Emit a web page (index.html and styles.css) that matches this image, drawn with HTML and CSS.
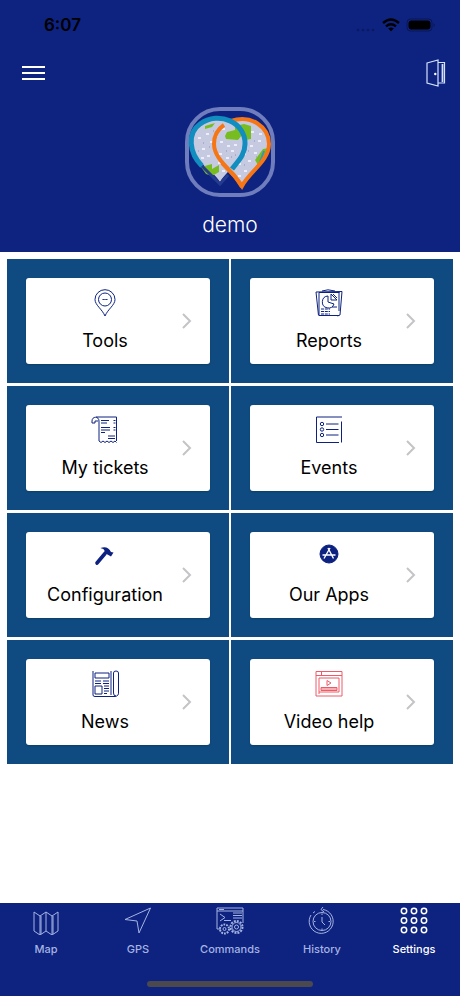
FILE: index.html
```html
<!DOCTYPE html>
<html lang="en">
<head>
  <meta charset="UTF-8" />
  <meta name="viewport" content="width=device-width, initial-scale=1.0"/>
  <title>Settings</title>
  <link rel="stylesheet" href="styles.css">
</head>
<body>

  <header>
    <!-- Phone status bar -->
    <div class="status-bar">
      <span class="time">6:07</span>
      <div class="status-icons">
        <svg width="20" height="14" viewBox="0 0 20 14" fill="#0b1a60"><circle cx="2" cy="12" r="1.3"/><circle cx="7" cy="12" r="1.3"/><circle cx="12" cy="12" r="1.3"/><circle cx="17" cy="12" r="1.3"/></svg>
        <svg width="18" height="14" viewBox="0 0 18 14" fill="none" stroke="#000" stroke-width="2.4"><path d="M1 5 Q9 -2 17 5"/><path d="M4 8.3 Q9 4 14 8.3"/><path d="M9 13.2 L6.2 10.6 Q9 8.6 11.8 10.6 Z" fill="#000" stroke="none"/></svg>
        <svg width="30" height="14" viewBox="0 0 30 14"><rect x="1" y="1" width="25" height="12" rx="3.5" fill="none" stroke="#0a1650"/><rect x="3" y="3" width="21" height="8" rx="2" fill="#000" stroke="#000"/><path d="M27.5 5 Q30 7 27.5 9 Z" fill="#0a1650"/></svg>
      </div>
    </div>

    <div class="toolbar">
      <button class="icon-btn" aria-label="Menu">
        <svg width="24" height="16" viewBox="0 0 24 16" stroke="#fff" stroke-width="2"><path d="M0 2h23M0 8h23M0 14h23"/></svg>
      </button>
      <button class="icon-btn" aria-label="Log out">
        <svg width="20" height="28" viewBox="0 0 20 28" fill="none" stroke="#d5e2ff" stroke-width="1.2"><path d="M1 4 L12 1 V27 L1 24 Z"/><path d="M12 3.5 H18.5 V24 H12"/><path d="M16.500 5 V23" stroke-width="1.8"/><circle cx="9.3" cy="15" r="1.2" fill="#fff" stroke="none"/></svg>
      </button>
    </div>

    <div class="profile">
      <svg class="avatar" width="90" height="90" viewBox="0 0 90 90">
        <rect x="2" y="2" width="86" height="86" rx="33" fill="#0e2280" stroke="#6f7dbc" stroke-width="4"/>
        <path d="M57 79 C48 64 30 53 30 37 C30 21 42 12 56 12 C71 12 83 22 83 37 C83 54 65 64 57 79 Z" fill="#c6cae0"/>
        <path d="M35 75 C27 62 7 54 7 37 C7 22 19 12 34 12 C49 12 60 22 60 37 C60 52 43 62 35 75 Z" fill="#c6cae0"/>
        <path d="M40 29 L42 25 L50 23 L50 19 L59 17 L66 19 L66 32 L60 33 L57 28 L53 33 L41 32 Z M16 60 L27 57 L27 62 L34 58 L34 65 L27 69 L21 67 Z M20 19 L30 16 L27 20 L20 22 Z M78 42 L84 41 L80 52 L73 58 L70 53 Z" fill="#78bd20"/>
        <path d="M79 44 L75 55" stroke="#3d91b7" stroke-width="2"/>
        <!-- light map speckle -->
        <path d="M14 31h1M22 27h1M26 35h1M18 42h1M31 29h1M38 22h1M23 49h1M35 47h1M43 39h1M50 38h1M42 51h1M29 43h1M17 51h1M36 35h1M66 39h1M74 34h1M70 46h1M64 54h1M60 64h1M54 57h1M67 25h1M75 27h1M34 56h1M47 44h1M59 47h1M54 69h1M38 64h1" stroke="#ecedf8" stroke-width="2" stroke-linecap="square"/>
        <path d="M18 36h1M28 24h1M24 40h1M32 51h1M41 44h1M46 50h1M63 44h1M69 34h1M59 58h1M71 50h1M13 44h1M50 48h1" stroke="#a9aecd" stroke-width="2"/>
        <path d="M46 14 C66 7 84 20 84 37 C84 54 65 64 57 79 C48 64 29 53 29 37 C29 28 33 22 39 18" fill="none" stroke="#f67616" stroke-width="4"/>
        <path d="M14 56 L35 77 L43 68" fill="none" stroke="#253b8f" stroke-width="3"/>
        <path d="M17 59 C4 46 2 26 15 17 C34 3 61 16 60 37 C60 48 53 54 47 62" fill="none" stroke="#128dc0" stroke-width="5"/>
        <path d="M37 56 L49 68 L57 80" fill="none" stroke="#f67616" stroke-width="4"/>
      </svg>
      <div class="username">demo</div>
    </div>
  </header>

  <!-- Settings tiles -->
  <main class="tiles">
    <a class="tile" href="#">
      <div class="card">
        <div class="card-body">
          <svg class="icon" viewBox="0 0 28 28"><path d="M14 27 C11 20 4 16 4 10.5 A10 9.8 0 0 1 24 10.5 C24 16 17 20 14 27 Z"/><circle cx="14" cy="10.5" r="6.5"/><path d="M11.5 10.5h5" stroke-dasharray="1.4 .4"/></svg>
          <span class="label">Tools</span>
        </div>
        <svg class="chevron" viewBox="0 0 10 16"><path d="M1 1 L8 8 L1 15"/></svg>
      </div>
    </a>
    <a class="tile" href="#">
      <div class="card">
        <div class="card-body">
          <svg class="icon" viewBox="0 0 28 28"><path d="M4 3.5 H24.5 M4 26.5 H24 M4 3.5 V26 M1 3 L3.5 26.5 M1 3 L27 2.5 L25 26 L22.5 27 M24 3 V22 M7 2 L13 .8 L20 2"/><path d="M13 7 A6 6 0 1 0 19 15 L13 13 Z M16 5 L22 11 H16 Z M18 5 L22 9 M17 18 h5"/><path d="M6 20h9M6 22.5h9M6 25h9" stroke-dasharray="3 .8"/></svg>
          <span class="label">Reports</span>
        </div>
        <svg class="chevron" viewBox="0 0 10 16"><path d="M1 1 L8 8 L1 15"/></svg>
      </div>
    </a>
    <a class="tile" href="#">
      <div class="card">
        <div class="card-body">
          <svg class="icon" viewBox="0 0 28 28"><path d="M8 25 V5 C8 0 1 0 1 5 V7 H4 M4 7 V5 H7 M5 1 H25.5 V25"/><path d="M8 25 l2 1.5 l2 -1.5 l2 1.5 l2 -1.5 l2 1.5 l2 -1.5 l2 1.5 l2 -1.5 l1.5 1.5"/><path d="M10 4.5h8M10 7h6M10 11.5h9M10 14h9M10 16.5h4M17 20h7M17 22.5h7M22.5 4.5h2M22.5 7h2M22.5 11.5h2M22.5 14h2"/></svg>
          <span class="label">My tickets</span>
        </div>
        <svg class="chevron" viewBox="0 0 10 16"><path d="M1 1 L8 8 L1 15"/></svg>
      </div>
    </a>
    <a class="tile" href="#">
      <div class="card">
        <div class="card-body">
          <svg class="icon" viewBox="0 0 28 28"><path d="M27 1 H1.5 V26.5 H24 M26.5 5.5 V26.5"/><circle cx="7" cy="8" r="1.7"/><circle cx="7" cy="13.5" r="1.7"/><circle cx="7" cy="19" r="1.7"/><path d="M11 8h12.5M11 13.5h12.5M11 19h12.5"/></svg>
          <span class="label">Events</span>
        </div>
        <svg class="chevron" viewBox="0 0 10 16"><path d="M1 1 L8 8 L1 15"/></svg>
      </div>
    </a>
    <a class="tile" href="#">
      <div class="card">
        <div class="card-body">
          <svg class="icon" viewBox="0 0 28 28"><path d="M6 20 L14 10.5" stroke-width="3.6" stroke-linecap="round"/><path d="M9.500 5 C14 3 18 4.500 20 9 L22.500 9.500 L20 13.500 L16.500 11.500 L13 10 C14.500 7.500 13 6 9.500 5 Z" fill="#0d2280" stroke="none"/></svg>
          <span class="label">Configuration</span>
        </div>
        <svg class="chevron" viewBox="0 0 10 16"><path d="M1 1 L8 8 L1 15"/></svg>
      </div>
    </a>
    <a class="tile" href="#">
      <div class="card">
        <div class="card-body">
          <svg class="icon" viewBox="0 0 28 28"><circle cx="14" cy="11" r="9" fill="#0d2280"/><path d="M13 5 L18.500 15.500 M15 5 L9 15.500 M7.500 12 H20.500" stroke="#fff" stroke-width="1.4"/></svg>
          <span class="label">Our Apps</span>
        </div>
        <svg class="chevron" viewBox="0 0 10 16"><path d="M1 1 L8 8 L1 15"/></svg>
      </div>
    </a>
    <a class="tile" href="#">
      <div class="card">
        <div class="card-body">
          <svg class="icon" viewBox="0 0 28 28"><path d="M2 1 V25 Q2 26.5 4 26.5 H24 Q28 26 27.5 22 V3 Q27.5 1 25 1 Q22.5 1 22.5 3 V23 Q22.5 26 25 26 M20 1 V25"/><path d="M4 3 H18 V8 H4 Z M4 16 H11 V24 H4 Z M4 11h6M4 13.5h6M12 11h6M12 13.5h6M13 16h5M13 18.5h5M13 21h5M13 23.5h3"/></svg>
          <span class="label">News</span>
        </div>
        <svg class="chevron" viewBox="0 0 10 16"><path d="M1 1 L8 8 L1 15"/></svg>
      </div>
    </a>
    <a class="tile" href="#">
      <div class="card">
        <div class="card-body">
          <svg class="icon red" viewBox="0 0 28 28"><path d="M1 1.5 H27 V26 H1 Z M1 5.5 H27 M6.5 1.5 V5.5 M4 24 V8 H24 V22 H4"/><path d="M12 10.5 L16 13 L12 15.5 Z M6 17.5 H22 V20.5 H6 Z M6 19 H22"/></svg>
          <span class="label">Video help</span>
        </div>
        <svg class="chevron" viewBox="0 0 10 16"><path d="M1 1 L8 8 L1 15"/></svg>
      </div>
    </a>
  </main>

  <!-- Bottom tabs -->
  <footer>
    <nav class="tabs">
      <a class="tab" href="#">
        <svg class="tab-icon" viewBox="0 0 28 28"><path d="M2 5 L8 9 L14 5 L20 9 L26 5 V24 L20 28 L14 24 L8 28 L2 24 Z M8 9 V28 M9 9 V27 M14 5 V24 M20 9 V28 M21 9 V27"/></svg>
        <span>Map</span>
      </a>
      <a class="tab" href="#">
        <svg class="tab-icon" viewBox="0 0 28 28"><path d="M1 12.5 L26.5 1 L15 26 L13 14 Z"/></svg>
        <span>GPS</span>
      </a>
      <a class="tab" href="#">
        <svg class="tab-icon" viewBox="0 0 28 28"><path d="M5 22 H1 V1 H27 V16 M1 4 H27 M3 2.5 H8"/><path d="M4 7 L9 10.5 L4 14 M8 13.5 H15 M17 6 h9 M17 8.5 h9 M17 11 h9"/><circle cx="20.5" cy="20" r="6" stroke-width="2" stroke-dasharray="2 1.1"/><circle cx="20.5" cy="20" r="4.5"/><circle cx="20.5" cy="20" r="2"/><circle cx="8.5" cy="22" r="4.5" stroke-width="2" stroke-dasharray="1.8 1"/><circle cx="8.5" cy="22" r="1.5"/></svg>
        <span>Commands</span>
      </a>
      <a class="tab" href="#">
        <svg class="tab-icon" viewBox="0 0 28 28"><path d="M15 2.5 A12 12 0 1 1 3 8 M15 0 L13 2.5 L16 5 M5 6 L7 4.5"/><circle cx="14" cy="14.5" r="9"/><path d="M14 10 V15 L17 18 M14 6.5 v1.5 M14 21.5 v1.5 M6 14.5 h1.5 M20.5 14.5 H22"/></svg>
        <span>History</span>
      </a>
      <a class="tab active" href="#">
        <svg class="tab-icon" viewBox="0 0 28 28"><circle cx="4" cy="4" r="2.7"/><circle cx="14" cy="4" r="2.7"/><circle cx="24" cy="4" r="2.7"/><circle cx="4" cy="13.5" r="2.7"/><circle cx="14" cy="13.5" r="2.7"/><circle cx="24" cy="13.5" r="2.7"/><circle cx="4" cy="23" r="2.7"/><circle cx="14" cy="23" r="2.7"/><circle cx="24" cy="23" r="2.7"/></svg>
        <span>Settings</span>
      </a>
    </nav>
    <div class="home-bar"></div>
  </footer>

</body>
</html>
```

FILE: styles.css
```css
:root {
  --navy: #0e2280;
  --tile: #0f4b80;
}

* {
  box-sizing: border-box;
}

body {
  margin: 0;
  min-height: 100vh;
  display: flex;
  flex-direction: column;
  font-family: Inter, "Liberation Sans", sans-serif;
  background: white;
}

a {
  text-decoration: none;
}

svg {
  display: block;
}

header {
  background: var(--navy);
  padding-bottom: 12px;
}

.status-bar {
  display: flex;
  justify-content: space-between;
  align-items: center;
  height: 50px;
  padding: 0 24px 0 44px;
}

.time {
  font-size: 17px;
  font-weight: 600;
  color: black;
}

.status-icons {
  display: flex;
  align-items: center;
  gap: 6px;
}

.toolbar {
  display: flex;
  justify-content: space-between;
  align-items: center;
  height: 46px;
  padding: 0 14px 0 22px;
}

.icon-btn {
  padding: 0;
  border: none;
  background: none;
  cursor: pointer;
}

.profile {
  display: flex;
  flex-direction: column;
  align-items: center;
  gap: 12px;
  padding-top: 11px;
}

.username {
  font-size: 21px;
  line-height: 31px;
  font-weight: 300;
  color: white;
}

/* Tiles */
.tiles {
  display: grid;
  grid-template-columns: 1fr 1fr;
  gap: 3px 2px;
  padding: 7px;
}

.tile {
  padding: 19px;
  background: var(--tile);
  color: black;
}

.card {
  display: flex;
  align-items: center;
  height: 86px;
  padding: 0 18px 0 2px;
  background: white;
  border-radius: 3px;
  box-shadow: 0 1px 2px rgba(0,0,0,0.2);
}

.card-body {
  flex: 1;
  display: flex;
  flex-direction: column;
  align-items: center;
  gap: 12px;
}

.icon {
  width: 28px;
  height: 28px;
  fill: none;
  stroke: #0d2280;
  stroke-width: 1;
}

.icon.red {
  stroke: #ee5b68;
}

.label {
  font-size: 18px;
  line-height: 24px;
  white-space: nowrap;
}

.chevron {
  width: 10px;
  height: 16px;
  fill: none;
  stroke: #c4c4c6;
  stroke-width: 2;
}

/* Bottom tabs */
footer {
  margin-top: auto;
  padding: 4px 0 9px;
  background: var(--navy);
}

.tabs {
  display: flex;
}

.tab {
  flex: 1;
  display: flex;
  flex-direction: column;
  align-items: center;
  gap: 6px;
  font-size: 11px;
  line-height: 16px;
  font-weight: 500;
  color: #a5b4e2;
}

.tab-icon {
  width: 28px;
  height: 28px;
  fill: none;
  stroke: #a5b4e2;
  stroke-width: 1;
}

.tab.active {
  color: white;
}

.tab.active .tab-icon {
  stroke: white;
  stroke-width: 1.5;
}

.home-bar {
  width: 36%;
  height: 6px;
  margin: 24px auto 0;
  border-radius: 3px;
  background: #4b494e;
}
```
